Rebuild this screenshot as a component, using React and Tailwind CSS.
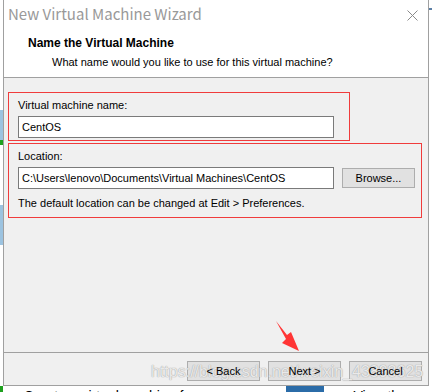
import React from 'react';

const ui = { fontFamily: '"Liberation Sans", Arial, sans-serif' };

const Button = ({ children }) => (
  <div className="w-[73px] h-[20px] border border-[#adadad] bg-[#e1e1e1] flex items-center justify-center text-[11px] text-black">
    <span className="relative z-10">{children}</span>
  </div>
);

const App = () => {
  return (
    <div className="relative w-[432px] h-[392px] overflow-hidden bg-white" style={ui}>
      <div className="flex h-[386px]">
        {/* left edge of the window behind */}
        <div className="w-[3px] flex flex-col">
          <div className="h-[110px] bg-white" />
          <div className="h-[30px] bg-[#9cc3e0]" />
          <div className="h-[5px] bg-[#1ea01e]" />
          <div className="h-[60px] bg-white" />
          <div className="h-[40px] bg-[#9cc3e0]" />
          <div className="flex-1 bg-white" />
        </div>

        {/* wizard dialog */}
        <div className="w-[426px] flex flex-col border-x border-b border-[#a0a0a0] bg-[#f0f0f0]">
          <div className="bg-white h-[78px] border-b border-[#a0a0a0]">
            <div className="flex items-center justify-between pl-[4px] pr-[10px] pt-[3px]">
              <span className="text-[15px] text-[#999999]" style={{ fontFamily: '"Noto Sans CJK SC", "Noto Sans", sans-serif' }}>
                New Virtual Machine Wizard
              </span>
              <svg width="11" height="11" viewBox="0 0 11 11" className="mt-[2px]">
                <path d="M0.5 0.5 L10.5 10.5 M10.5 0.5 L0.5 10.5" stroke="#8a8a8a" strokeWidth="1" />
              </svg>
            </div>
            <div className="pl-[24px] pt-[8px] text-[12px] font-bold text-black">Name the Virtual Machine</div>
            <div className="pl-[48px] pt-[2px] text-[11px] text-black">What name would you like to use for this virtual machine?</div>
          </div>

          <div className="flex-1 flex flex-col pl-[4px] pt-[14px]">
            <div className="w-[342px] h-[49px] border border-[#f03c3c] pl-[9px] pt-[5px]">
              <div className="text-[11px] text-black leading-[14px]">Virtual machine name:</div>
              <div className="mt-[4px] w-[316px] h-[22px] border border-[#7a7a7a] bg-white flex items-center pl-[3px] text-[11px]">
                CentOS
              </div>
            </div>
            <div className="mt-[2px] w-[414px] h-[75px] border border-[#f03c3c] pl-[9px] pt-[5px]">
              <div className="text-[11px] text-black leading-[14px]">Location:</div>
              <div className="mt-[4px] flex items-center gap-[8px]">
                <div className="w-[316px] h-[22px] border border-[#7a7a7a] bg-white flex items-center pl-[3px] text-[11px]">
                  C:\Users\lenovo\Documents\Virtual Machines\CentOS
                </div>
                <Button>Browse...</Button>
              </div>
              <div className="mt-[6px] text-[11px] text-black">The default location can be changed at Edit &gt; Preferences.</div>
            </div>
          </div>

          <div className="h-[33px] border-t border-[#a0a0a0] flex items-start justify-end gap-[8px] pr-[6px] pt-[8px]">
            <Button>&lt; Back</Button>
            <Button>Next &gt;</Button>
            <Button>Cancel</Button>
          </div>
        </div>

        {/* right edge of the window behind */}
        <div className="flex-1 flex flex-col">
          <div className="h-[8px] bg-white" />
          <div className="h-[2px] bg-[#5b7fa6]" />
          <div className="flex-1 bg-white" />
        </div>
      </div>

      <div className="h-[6px] flex items-start overflow-hidden text-[14px] leading-[14px] text-black">
        <div className="w-[3px] h-[6px] bg-[#1ea01e]" />
        <span className="ml-[21px] mt-[3px]">Create a virtual machine from an</span>
        <div className="ml-[72px] w-[40px] h-[6px] bg-[#2b6ca8]" />
        <span className="ml-[30px] mt-[3px]">View the help</span>
      </div>

      {/* red annotation arrow */}
      <svg className="absolute left-[270px] top-[318px]" width="34" height="36" viewBox="0 0 34 36">
        <polygon points="6,3 17,17 21,14 29,33 12,25 16,21" fill="#ff3535" />
      </svg>

      {/* watermark */}
      <div
        className="absolute left-[151px] top-[362px] text-[16px] leading-[20px] text-white/75 whitespace-nowrap"
        style={{ textShadow: '0 0 1px #a8a8a8, 0 0 1px #a8a8a8' }}
      >
        https://blog.csdn.net/weixin_43893625
      </div>
    </div>
  );
};

export default App;
